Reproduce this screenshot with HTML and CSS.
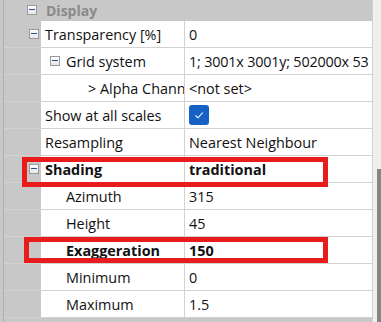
FILE: index.html
```html
<!DOCTYPE html>
<html lang="en">
<head>
    <meta charset="UTF-8">
    <title>Properties</title>
    <link rel="stylesheet" href="styles.css">
</head>
<body>
    <div class="panel">
        <div class="grid">
            <div class="category">
                <span class="toggle"></span>
                <span class="category-name">Display</span>
            </div>

            <div class="row">
                <div class="gutter"><span class="toggle"></span></div>
                <div class="name">Transparency [%]</div>
                <div class="value">0</div>
            </div>
            <div class="row">
                <div class="gutter"></div>
                <div class="name level-1"><span class="toggle"></span>Grid system</div>
                <div class="value tight">1; 3001x 3001y; 502000x 53</div>
            </div>
            <div class="row">
                <div class="gutter"></div>
                <div class="name level-2">&gt; Alpha Chann</div>
                <div class="value">&lt;not set&gt;</div>
            </div>
            <div class="row">
                <div class="gutter"></div>
                <div class="name">Show at all scales</div>
                <div class="value"><span class="checkbox"><svg width="12" height="10" viewBox="0 0 12 10"><path d="M2.5 5.5 L5 7.8 L9.8 2.5" fill="none" stroke="#fff" stroke-width="1.1"/></svg></span></div>
            </div>
            <div class="row">
                <div class="gutter"></div>
                <div class="name">Resampling</div>
                <div class="value">Nearest Neighbour</div>
            </div>
            <div class="row">
                <div class="gutter"><span class="toggle"></span></div>
                <div class="name bold">Shading</div>
                <div class="value bold">traditional</div>
            </div>
            <div class="row">
                <div class="gutter"></div>
                <div class="name level-1">Azimuth</div>
                <div class="value">315</div>
            </div>
            <div class="row">
                <div class="gutter"></div>
                <div class="name level-1">Height</div>
                <div class="value">45</div>
            </div>
            <div class="row">
                <div class="gutter"></div>
                <div class="name level-1 bold">Exaggeration</div>
                <div class="value bold">150</div>
            </div>
            <div class="row">
                <div class="gutter"></div>
                <div class="name level-1">Minimum</div>
                <div class="value">0</div>
            </div>
            <div class="row">
                <div class="gutter"></div>
                <div class="name level-1">Maximum</div>
                <div class="value">1.5</div>
            </div>

            <div class="mark mark-shading"></div>
            <div class="mark mark-exaggeration"></div>
        </div>
        <div class="scrollbar"><div class="thumb"></div></div>
    </div>
</body>
</html>
```

FILE: styles.css
```css
body {
    margin: 0;
    font-family: "Open Sans", "Noto Sans", sans-serif;
    font-size: 14.4px;
    color: #111;
    background: #c8c8c8;
}

.panel {
    display: flex;
    width: 381px;
    height: 322px;
    overflow: hidden;
}

.grid {
    position: relative;
    width: 368px;
    background: #c8c8c8;
    border-left: 1px solid #b0b0b0;
    margin-left: 3px;
    border-right: 1px solid #d0d0d0;
}

.category {
    display: flex;
    align-items: center;
    height: 22px;
    padding-left: 23px;
    margin-top: -1px;
}

.category-name {
    font-weight: bold;
    font-size: 14px;
    color: #8a8a8a;
    margin-left: 9px;
}

.toggle {
    display: inline-block;
    box-sizing: border-box;
    width: 10px;
    height: 10px;
    border: 1px solid #9a9a9a;
    background: linear-gradient(#fff, #e6e6e6);
    position: relative;
    flex-shrink: 0;
}

.toggle::after {
    content: "";
    position: absolute;
    left: 1px;
    right: 1px;
    top: 3px;
    height: 1px;
    background: #2a4a9a;
}

.row {
    display: flex;
    height: 27px;
    border-bottom: 1px solid #d2d2d2;
    box-sizing: border-box;
}

.gutter {
    width: 37px;
    flex-shrink: 0;
    display: flex;
    align-items: center;
    padding-left: 25px;
    box-sizing: border-box;
}

.name {
    width: 144px;
    flex-shrink: 0;
    background: #fff;
    border-right: 1px solid #d2d2d2;
    box-sizing: border-box;
    padding-left: 4px;
    display: flex;
    align-items: center;
    white-space: nowrap;
    overflow: hidden;
}

.name.level-1 { padding-left: 25px; }
.name.level-2 { padding-left: 47px; }

.name .toggle {
    margin-left: -16px;
    margin-right: 6px;
}

.value {
    flex: 1;
    background: #fff;
    padding-left: 4px;
    display: flex;
    align-items: center;
    white-space: nowrap;
    overflow: hidden;
}

.value.tight {
    letter-spacing: -0.2px;
}

.bold { font-weight: bold; }

.checkbox {
    display: flex;
    align-items: center;
    justify-content: center;
    width: 20px;
    height: 20px;
    border-radius: 3px;
    background: #1561c4;
}

.mark {
    position: absolute;
    border: 5px solid #e81c1c;
    box-sizing: border-box;
}

.mark-shading {
    left: 18px;
    top: 157px;
    width: 306px;
    height: 30px;
}

.mark-exaggeration {
    left: 20px;
    top: 237px;
    width: 304px;
    height: 26px;
}

.scrollbar {
    flex: 1;
    background: #f0f0f0;
    position: relative;
}

.thumb {
    position: absolute;
    right: 0;
    top: 169px;
    width: 4px;
    bottom: 0;
    background: #858585;
}
```
